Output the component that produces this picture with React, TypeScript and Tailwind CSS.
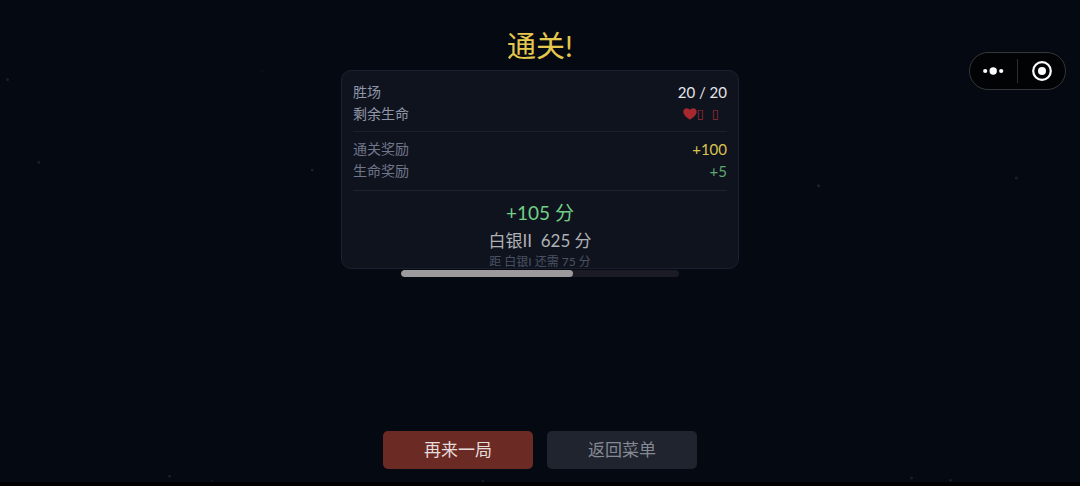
type RowProps = {
  label: string;
  labelColor: string;
  children: React.ReactNode;
};

const stars = [
  { x: "0.7%", y: "16.4%", r: 1.4, o: 0.1 },
  { x: "3.6%", y: "33.4%", r: 1.4, o: 0.09 },
  { x: "24.3%", y: "14.6%", r: 1, o: 0.04 },
  { x: "28.9%", y: "35%", r: 1.4, o: 0.1 },
  { x: "75.8%", y: "38.2%", r: 1.5, o: 0.1 },
  { x: "94.1%", y: "36.6%", r: 1.5, o: 0.09 },
  { x: "15.7%", y: "98%", r: 1.3, o: 0.1 },
  { x: "19.6%", y: "98.9%", r: 1.2, o: 0.06 },
  { x: "44.7%", y: "99%", r: 1.2, o: 0.07 },
  { x: "84.4%", y: "98.4%", r: 1.4, o: 0.09 },
  { x: "88%", y: "98.8%", r: 1.2, o: 0.1 },
];

function Starfield() {
  return (
    <svg
      className="pointer-events-none absolute inset-0 h-full w-full"
      aria-hidden="true"
    >
      {stars.map((s) => (
        <circle
          key={s.x}
          cx={s.x}
          cy={s.y}
          r={s.r}
          fill="#fff"
          fillOpacity={s.o}
        />
      ))}
    </svg>
  );
}

function Row({ label, labelColor, children }: RowProps) {
  return (
    <div className="flex items-center justify-between leading-[22px]">
      <dt className={`text-sm ${labelColor}`}>{label}</dt>
      <dd className="text-[15px]">{children}</dd>
    </div>
  );
}

function Lives() {
  return (
    <span className="flex items-center pr-2 text-[#9a2f3a]">
      <svg width="14" height="12" viewBox="0 0 14 12" aria-hidden="true">
        <path
          d="M7 11.8C4.6 10.1 0.3 7.3 0.3 3.8C0.3 1.7 1.8 0.3 3.7 0.3C5.2 0.3 6.4 1 7 2.2C7.6 1 8.8 0.3 10.3 0.3C12.2 0.3 13.7 1.7 13.7 3.8C13.7 7.3 9.4 10.1 7 11.8Z"
          fill="#a7282f"
        />
      </svg>
      <span className="flex gap-2 font-['DejaVu_Sans',sans-serif] text-[13px]">
        <span>▯</span>
        <span>▯</span>
      </span>
    </span>
  );
}

function Capsule() {
  return (
    <div className="absolute right-[14px] top-[52px] flex h-[38px] w-[97px] items-center rounded-full border border-[#35373b] bg-[#020305]">
      <button
        type="button"
        aria-label="更多"
        className="flex h-full flex-1 items-center justify-center"
      >
        <svg width="22" height="10" viewBox="0 0 22 10" fill="#fff">
          <circle cx="2.2" cy="5" r="2.1" />
          <circle cx="10.2" cy="5" r="3.7" />
          <circle cx="18.2" cy="5" r="2.1" />
        </svg>
      </button>
      <span className="h-6 w-px bg-[#2c2e32]" />
      <button
        type="button"
        aria-label="关闭"
        className="flex h-full flex-1 items-center justify-center"
      >
        <svg width="20" height="20" viewBox="0 0 20 20">
          <circle
            cx="10"
            cy="10"
            r="8.8"
            fill="none"
            stroke="#fff"
            strokeWidth="2.2"
          />
          <circle cx="10" cy="10" r="4" fill="#fff" />
        </svg>
      </button>
    </div>
  );
}

export default function App() {
  const percent = 62;

  return (
    <div className="relative flex min-h-screen flex-col bg-[#050911] font-['Lato','Noto_Sans_CJK_SC',sans-serif]">
      <Starfield />
      <Capsule />

      <main className="relative mx-auto flex w-full max-w-[398px] flex-1 flex-col items-center pt-[26px]">
        <h1 className="text-[29px] leading-10 text-[#e6c84f]">通关!</h1>

        <section className="mt-1 w-full rounded-[10px] border border-[#1c2030] bg-[#0f131e] px-[11px] pt-[10px]">
          <dl>
            <Row label="胜场" labelColor="text-[#8f96a8]">
              <span className="text-[#e4e6ea]">20 / 20</span>
            </Row>
            <Row label="剩余生命" labelColor="text-[#8f96a8]">
              <Lives />
            </Row>
          </dl>
          <hr className="my-[6px] border-[#1b1f2a]" />
          <dl>
            <Row label="通关奖励" labelColor="text-[#6f768a]">
              <span className="text-[#dcc34f]">+100</span>
            </Row>
            <Row label="生命奖励" labelColor="text-[#6f768a]">
              <span className="text-[#5fa873]">+5</span>
            </Row>
          </dl>
          <hr className="my-2 border-[#1f232e]" />
          <div className="text-center">
            <p className="text-[19px] leading-7 text-[#73cf86]">+105 分</p>
            <p className="whitespace-pre text-[17px] leading-7 text-[#b0b1b5]">
              白银II{"  "}625 分
            </p>
            <p className="text-xs leading-[13px] text-[#4b5164]">
              距 白银I 还需 75 分
            </p>
          </div>
        </section>

        <div
          role="progressbar"
          aria-label="段位进度"
          aria-valuenow={percent}
          className="mt-px h-[7px] w-[70%] overflow-hidden rounded-full bg-[#1a1b25]"
        >
          <div
            className="h-full rounded-full bg-[#9c9a9d]"
            style={{ width: `${percent}%` }}
          />
        </div>
      </main>

      <div className="relative flex justify-center gap-[14px] pb-[13px]">
        <button
          type="button"
          className="h-[38px] w-[150px] rounded-[5px] bg-[#6b2a24] text-[17px] text-[#e6dcdb]"
        >
          再来一局
        </button>
        <button
          type="button"
          className="h-[38px] w-[150px] rounded-[5px] bg-[#20242f] text-[17px] text-[#858993]"
        >
          返回菜单
        </button>
      </div>
      <div className="h-1 bg-black" />
    </div>
  );
}
